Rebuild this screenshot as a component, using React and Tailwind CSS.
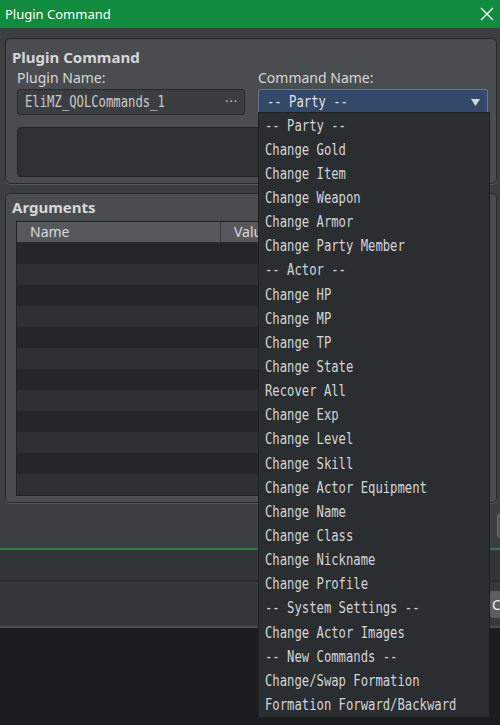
const COMMANDS = [
  "-- Party --",
  "Change Gold",
  "Change Item",
  "Change Weapon",
  "Change Armor",
  "Change Party Member",
  "-- Actor --",
  "Change HP",
  "Change MP",
  "Change TP",
  "Change State",
  "Recover All",
  "Change Exp",
  "Change Level",
  "Change Skill",
  "Change Actor Equipment",
  "Change Name",
  "Change Class",
  "Change Nickname",
  "Change Profile",
  "-- System Settings --",
  "Change Actor Images",
  "-- New Commands --",
  "Change/Swap Formation",
  "Formation Forward/Backward",
];

// condensed mono look: DejaVu Sans Mono squeezed horizontally
const mono = "inline-block origin-left scale-x-[0.815] font-['DejaVu_Sans_Mono',monospace] text-[15px] leading-none";

const App = () => {
  const rows = Array.from({ length: 12 });

  return (
    <div className="relative w-[500px] h-[725px] overflow-hidden bg-[#1b1c1e] font-['Noto_Sans',sans-serif]">
      {/* Title bar */}
      <div className="h-[28px] bg-[#118b3d] flex items-center justify-between pl-[5px] pr-[6px]">
        <span className="text-white text-[13px] leading-none">Plugin Command</span>
        <svg width="14" height="14" viewBox="0 0 14 14" className="text-white">
          <path d="M1 1 L13 13 M13 1 L1 13" stroke="currentColor" strokeWidth="1.4" fill="none" />
        </svg>
      </div>

      {/* Body */}
      <div className="h-[520px] bg-[#3c3f42] pt-[10px] pl-[5px] pr-[3px]">
        {/* Plugin Command group */}
        <div className="h-[146px] rounded-[5px] border border-[#26282a] bg-[#4a4d50] shadow-[0_1px_0_#55585b] pl-[11px] pr-[7px]">
          <div className="h-[26px] flex items-end">
            <span className="-ml-[5px] text-[15px] font-bold text-[#d6d6d6] leading-none">Plugin Command</span>
          </div>
          <div className="flex gap-[13px] mt-[3px]">
            <div className="w-[228px]">
              <div className="h-[20px] text-[14px] text-[#d6d6d6] leading-[20px]">Plugin Name:</div>
              <div className="mt-[1px] h-[26px] rounded-[3px] border border-[#27292b] bg-[#3b3e41] flex items-center justify-between pl-[7px] pr-[6px] overflow-hidden">
                <span className={`${mono} text-[#c9c9c9]`}>EliMZ_QOLCommands_1</span>
                <span className="text-[#c9c9c9] text-[12px] leading-none tracking-[1px]">···</span>
              </div>
            </div>
            <div className="w-[230px]">
              <div className="h-[20px] text-[14px] text-[#d6d6d6] leading-[20px]">Command Name:</div>
              <div className="mt-[1px] h-[26px] rounded-[2px] border border-[#5c7aa3] bg-[#344868] flex items-center justify-between pl-[8px] pr-[7px]">
                <span className={`${mono} text-[#dfe4ea]`}>-- Party --</span>
                <svg width="9" height="7" viewBox="0 0 9 7">
                  <path d="M0 0 L9 0 L4.5 7 Z" fill="#cfd6df" />
                </svg>
              </div>
            </div>
          </div>
          <div className="mt-[12px] h-[50px] rounded-[4px] border border-[#232527] bg-[#2f3235]" />
        </div>

        {/* Arguments group */}
        <div className="mt-[9px] h-[310px] rounded-[5px] border border-[#26282a] bg-[#4a4d50] shadow-[0_1px_0_#55585b] pl-[10px] pr-[7px]">
          <div className="h-[21px] flex items-end">
            <span className="-ml-[4px] text-[15px] font-bold text-[#d6d6d6] leading-none">Arguments</span>
          </div>
          <div className="mt-[6px] border border-[#1f2123] bg-[#26292b]">
            <div className="h-[21px] flex bg-[#56595c] border-b border-[#2a2c2e]">
              <div className="w-[204px] border-r border-[#3a3c3e] pl-[13px] text-[14px] leading-[20px] text-[#d9d9d9]">Name</div>
              <div className="flex-1 pl-[13px] text-[14px] leading-[20px] text-[#d9d9d9]">Value</div>
            </div>
            {rows.map((_, i) => (
              <div key={i} className={`h-[21px] ${i % 2 === 0 ? "bg-[#24272a]" : "bg-[#2e3134]"}`} />
            ))}
          </div>
        </div>

        {/* right side button below the groups */}
        <div className="mt-[10px] flex justify-end">
          <div className="w-[60px] h-[25px] -mr-[60px] rounded-[4px] border border-[#6a6d70] bg-[#55585b]" />
        </div>
      </div>

      {/* Footer bands */}
      <div className="h-[2px] bg-[#2e7d4c]" />
      <div className="h-[32px] bg-[#323538] border-b-2 border-[#2a2c2e]" />
      <div className="h-[46px] bg-[#35383b] border-b-2 border-[#4a4d50] flex items-center justify-end overflow-hidden">
        <div className="w-[12px] h-[27px] -mr-[2px] rounded-l-[3px] bg-[#5b5e61] text-[#eeeeee] text-[14px] leading-[27px] pl-[2px] overflow-hidden whitespace-nowrap">
          C
        </div>
      </div>

      {/* Open dropdown list */}
      <div className="absolute left-[258px] top-[112px] w-[232px] h-[606px] bg-[#2b2e31] border border-[#1f2123] pt-[1px]">
        {COMMANDS.map((c) => (
          <div key={c} className="h-[24.15px] flex items-center pl-[6px] text-[#d2d4d6] whitespace-pre">
            <span className={mono}>{c}</span>
          </div>
        ))}
      </div>
    </div>
  );
};

export default App;
